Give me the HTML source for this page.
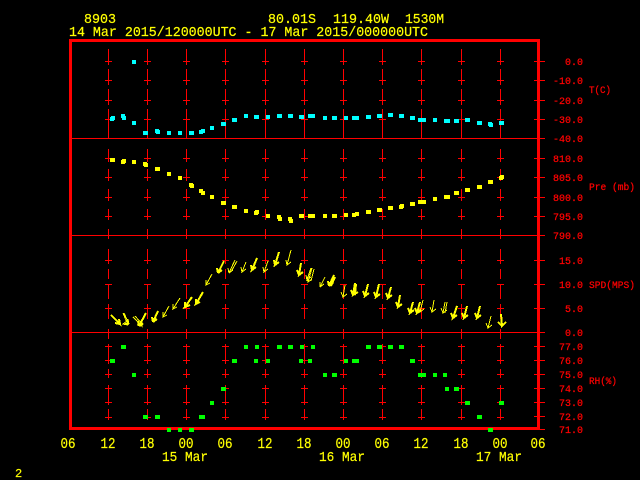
<!DOCTYPE html>
<html><head><meta charset="utf-8"><style>
html,body{margin:0;padding:0;background:#000;width:640px;height:480px;overflow:hidden}
svg{display:block}
text{font-family:"Liberation Mono",monospace}
.y{fill:#ff0;font-size:14px;stroke:#ff0;stroke-width:.2px}
.r{fill:#f00;font-size:10px;text-anchor:end;stroke:#f00;stroke-width:.25px}
.l{fill:#f00;font-size:10.500px;stroke:#f00;stroke-width:.25px}
.x{fill:#ff0;font-size:14.500px;text-anchor:middle;stroke:#ff0;stroke-width:.2px}
</style></head><body>
<svg width="640" height="480" viewBox="0 0 640 480" xmlns="http://www.w3.org/2000/svg">
<rect width="640" height="480" fill="#000"/>
<defs>
<path id="col" d="M.5 49V65M.5 69V85M.5 89V105M.5 109V138M.5 149V162M.5 169V181M.5 189V201M.5 209V220M.5 229V239M.5 249V264M.5 269V279M.5 284V299M.5 304V319M.5 329V339M.5 344V364M.5 369V378M.5 385V405M.5 409V420M-3 61.500H4M-3 80.500H4M-3 100.500H4M-3 119.500H4M-3 158.500H4M-3 177.500H4M-3 197.500H4M-3 216.500H4M-3 260.500H4M-3 284.500H4M-3 308.500H4M-3 346.500H4M-3 360.500H4M-3 374.500H4M-3 388.500H4M-3 402.500H4M-3 417.500H4" stroke="#f00" stroke-width="1" fill="none" shape-rendering="crispEdges"/>
</defs>
<use href="#col" x="108"/><use href="#col" x="147"/><use href="#col" x="186"/><use href="#col" x="225"/><use href="#col" x="265"/><use href="#col" x="304"/><use href="#col" x="343"/><use href="#col" x="382"/><use href="#col" x="421"/><use href="#col" x="461"/><use href="#col" x="500"/>
<g fill="#f00" shape-rendering="crispEdges">
<rect x="69" y="39" width="471" height="3"/>
<rect x="69" y="39" width="3" height="391"/>
<rect x="537" y="39" width="3" height="391"/>
<rect x="69" y="427" width="471" height="3"/>
<rect x="72" y="138" width="473" height="1"/>
<rect x="72" y="235" width="473" height="1"/>
<rect x="72" y="332" width="473" height="1"/>
<rect x="540" y="429" width="5" height="1"/>
<rect x="534" y="61" width="11" height="1"/><rect x="534" y="80" width="11" height="1"/><rect x="534" y="100" width="11" height="1"/><rect x="534" y="119" width="11" height="1"/>
<rect x="534" y="158" width="11" height="1"/><rect x="534" y="177" width="11" height="1"/><rect x="534" y="197" width="11" height="1"/><rect x="534" y="216" width="11" height="1"/>
<rect x="534" y="260" width="11" height="1"/><rect x="534" y="284" width="11" height="1"/><rect x="534" y="308" width="11" height="1"/>
<rect x="534" y="346" width="11" height="1"/><rect x="534" y="360" width="11" height="1"/><rect x="534" y="374" width="11" height="1"/><rect x="534" y="388" width="11" height="1"/><rect x="534" y="402" width="11" height="1"/><rect x="534" y="416" width="11" height="1"/>
</g>
<g fill="#0ff" shape-rendering="crispEdges">
<rect x="110" y="117" width="4" height="4"/><rect x="111" y="116" width="4" height="4"/><rect x="121" y="114" width="4" height="4"/><rect x="122" y="116" width="4" height="4"/><rect x="132" y="121" width="4" height="4"/><rect x="132" y="60" width="4" height="4"/><rect x="143" y="131" width="5" height="4"/><rect x="155" y="129" width="4" height="4"/><rect x="156" y="130" width="4" height="4"/><rect x="167" y="131" width="4" height="4"/><rect x="178" y="131" width="4" height="4"/><rect x="189" y="131" width="5" height="4"/><rect x="199" y="130" width="4" height="4"/><rect x="201" y="129" width="4" height="4"/><rect x="210" y="126" width="4" height="4"/><rect x="221" y="122" width="5" height="4"/><rect x="232" y="118" width="5" height="4"/><rect x="244" y="114" width="4" height="4"/><rect x="254" y="115" width="5" height="4"/><rect x="266" y="115" width="4" height="4"/><rect x="277" y="114" width="5" height="4"/><rect x="288" y="114" width="5" height="4"/><rect x="299" y="115" width="5" height="4"/><rect x="308" y="114" width="7" height="4"/><rect x="323" y="116" width="4" height="4"/><rect x="332" y="116" width="5" height="4"/><rect x="344" y="116" width="4" height="4"/><rect x="352" y="116" width="7" height="4"/><rect x="366" y="115" width="5" height="4"/><rect x="377" y="114" width="5" height="4"/><rect x="388" y="113" width="5" height="4"/><rect x="399" y="114" width="5" height="4"/><rect x="410" y="116" width="5" height="4"/><rect x="418" y="118" width="8" height="4"/><rect x="433" y="118" width="4" height="4"/><rect x="444" y="119" width="6" height="4"/><rect x="454" y="119" width="5" height="4"/><rect x="465" y="118" width="5" height="4"/><rect x="477" y="121" width="5" height="4"/><rect x="488" y="122" width="4" height="4"/><rect x="489" y="123" width="4" height="4"/><rect x="499" y="121" width="5" height="4"/>
</g>
<g fill="#ff0" shape-rendering="crispEdges">
<rect x="110" y="158" width="5" height="4"/><rect x="121" y="160" width="4" height="4"/><rect x="122" y="159" width="4" height="4"/><rect x="132" y="160" width="4" height="4"/><rect x="143" y="162" width="4" height="4"/><rect x="144" y="163" width="4" height="4"/><rect x="155" y="167" width="5" height="4"/><rect x="167" y="172" width="4" height="4"/><rect x="178" y="176" width="4" height="4"/><rect x="189" y="183" width="4" height="4"/><rect x="190" y="184" width="4" height="4"/><rect x="199" y="189" width="4" height="4"/><rect x="201" y="191" width="4" height="4"/><rect x="210" y="195" width="4" height="4"/><rect x="221" y="201" width="5" height="4"/><rect x="232" y="205" width="5" height="4"/><rect x="244" y="209" width="4" height="4"/><rect x="254" y="211" width="4" height="4"/><rect x="255" y="210" width="4" height="4"/><rect x="266" y="214" width="4" height="4"/><rect x="277" y="215" width="4" height="4"/><rect x="278" y="217" width="4" height="4"/><rect x="288" y="217" width="4" height="4"/><rect x="289" y="219" width="4" height="4"/><rect x="299" y="214" width="5" height="4"/><rect x="308" y="214" width="7" height="4"/><rect x="323" y="214" width="4" height="4"/><rect x="332" y="214" width="5" height="4"/><rect x="344" y="213" width="4" height="4"/><rect x="352" y="213" width="4" height="4"/><rect x="355" y="212" width="4" height="4"/><rect x="366" y="210" width="5" height="4"/><rect x="377" y="208" width="5" height="4"/><rect x="388" y="206" width="5" height="4"/><rect x="399" y="205" width="4" height="4"/><rect x="400" y="204" width="4" height="4"/><rect x="410" y="202" width="5" height="4"/><rect x="418" y="200" width="8" height="4"/><rect x="433" y="197" width="4" height="4"/><rect x="444" y="195" width="6" height="4"/><rect x="454" y="191" width="5" height="4"/><rect x="465" y="188" width="5" height="4"/><rect x="477" y="185" width="5" height="4"/><rect x="488" y="180" width="5" height="4"/><rect x="499" y="176" width="4" height="4"/><rect x="500" y="175" width="4" height="4"/>
</g>
<g fill="none" stroke="#ff0" stroke-width="1" shape-rendering="crispEdges">
<path d="M111 315L120 324l-1-5m1 5l-5-1" stroke-width="2"/>
<path d="M123 313L128 325l-1-5m1 5l-5-1l4-3M124 313L129 324l-1-5m1 5l-5-1"/>
<path d="M133 317L142 326l-1-5m1 5l-5-1M135 316L143 325"/>
<path d="M146 313L139 326l4-3m-4 3l-1-5" stroke-width="2"/>
<path d="M158 311L153 322l4-3m-4 3l-1-5" stroke-width="2"/>
<path d="M169 306L163 317l4-2m-4 2l0-5"/>
<path d="M180 298L173 309l4-2m-4 2l0-5"/>
<path d="M192 297L185 307l5-2m-5 2l0-5" stroke-width="2"/>
<path d="M203 292L196 304l4-2m-4 2l0-5" stroke-width="2"/>
<path d="M212 274L206 285l4-2m-4 2l0-5"/>
<path d="M224 261L218 273l4-3m-4 3l-1-5" stroke-width="2"/>
<path d="M235 260L229 273l4-3m-4 3l-1-5M237 261L231 272"/>
<path d="M246 262L242 272l4-3m-4 3l-1-5"/>
<path d="M257 258L252 270l4-3m-4 3l-1-5" stroke-width="2"/>
<path d="M268 261L264 272l4-3m-4 3l-1-5"/>
<path d="M279 252L275 265l4-3m-4 3l-1-5" stroke-width="2"/>
<path d="M291 250L287 265l4-3m-4 3l-1-5"/>
<path d="M301 263L299 275l4-3m-4 3l-2-5" stroke-width="2"/>
<path d="M311 268L307 280l4-3m-4 3l-1-5"/>
<path d="M312 268L308 282l4-3m-4 3l-1-5M314 269L311 281"/>
<path d="M325 277L320 287l4-3m-4 3l0-5"/>
<path d="M334 275L329 286l4-3m-4 3l-1-5M335 277L331 286" stroke-width="2"/>
<path d="M345 285L343 297l4-3m-4 3l-2-5"/>
<path d="M355 283L353 295l5-3m-5 3l-2-5M356 284L355 294l-3-1" stroke-width="2"/>
<path d="M368 284L365 296l4-3m-4 3l-2-5" stroke-width="2"/>
<path d="M379 284L376 297l4-3m-4 3l-2-5" stroke-width="2"/>
<path d="M391 287L388 298l4-3m-4 3l-2-5" stroke-width="2"/>
<path d="M400 295L398 307l4-3m-4 3l-2-5" stroke-width="2"/>
<path d="M413 302L410 313l4-3m-4 3l-2-5" stroke-width="2"/>
<path d="M420 302L417 313l4-3m-4 3l-2-5" stroke-width="2"/>
<path d="M423 300L420 312l4-3m-4 3l-2-5"/>
<path d="M434 300L432 312l4-3m-4 3l-2-5"/>
<path d="M445 302L443 313l4-3m-4 3l-2-5M447 302L445 313"/>
<path d="M457 306L453 318l4-3m-4 3l-2-5" stroke-width="2"/>
<path d="M467 306L464 318l4-3m-4 3l-2-5" stroke-width="2"/>
<path d="M480 306L477 318l4-3m-4 3l-2-5" stroke-width="2"/>
<path d="M491 316L488 328l4-3m-4 3l-2-5"/>
<path d="M501 314L502 326l4-4m-4 4l-4-4" stroke-width="2"/>
</g>
<g fill="#0f0" shape-rendering="crispEdges">
<rect x="121" y="345" width="5" height="4"/><rect x="110" y="359" width="5" height="4"/><rect x="132" y="373" width="4" height="4"/><rect x="143" y="415" width="5" height="4"/><rect x="155" y="415" width="5" height="4"/><rect x="167" y="428" width="4" height="4"/><rect x="178" y="428" width="4" height="4"/><rect x="189" y="428" width="5" height="4"/><rect x="199" y="415" width="6" height="4"/><rect x="210" y="401" width="4" height="4"/><rect x="221" y="387" width="5" height="4"/><rect x="232" y="359" width="5" height="4"/><rect x="244" y="345" width="4" height="4"/><rect x="254" y="359" width="4" height="4"/><rect x="255" y="345" width="4" height="4"/><rect x="266" y="359" width="4" height="4"/><rect x="277" y="345" width="5" height="4"/><rect x="288" y="345" width="5" height="4"/><rect x="300" y="345" width="4" height="4"/><rect x="299" y="359" width="4" height="4"/><rect x="308" y="359" width="4" height="4"/><rect x="311" y="345" width="4" height="4"/><rect x="323" y="373" width="4" height="4"/><rect x="332" y="373" width="5" height="4"/><rect x="344" y="359" width="4" height="4"/><rect x="352" y="359" width="7" height="4"/><rect x="366" y="345" width="5" height="4"/><rect x="377" y="345" width="5" height="4"/><rect x="388" y="345" width="5" height="4"/><rect x="399" y="345" width="5" height="4"/><rect x="410" y="359" width="5" height="4"/><rect x="418" y="373" width="8" height="4"/><rect x="433" y="373" width="4" height="4"/><rect x="443" y="373" width="4" height="4"/><rect x="445" y="387" width="4" height="4"/><rect x="454" y="387" width="5" height="4"/><rect x="465" y="401" width="5" height="4"/><rect x="477" y="415" width="5" height="4"/><rect x="488" y="428" width="5" height="4"/><rect x="499" y="401" width="5" height="4"/>
</g>
<text class="y" x="84" y="23" textLength="32" lengthAdjust="spacingAndGlyphs">8903</text>
<text class="y" x="268" y="23" textLength="48" lengthAdjust="spacingAndGlyphs">80.01S</text>
<text class="y" x="333" y="23" textLength="56" lengthAdjust="spacingAndGlyphs">119.40W</text>
<text class="y" x="405" y="23" textLength="39" lengthAdjust="spacingAndGlyphs">1530M</text>
<text class="y" x="69" y="36" textLength="359" lengthAdjust="spacingAndGlyphs">14 Mar 2015/120000UTC - 17 Mar 2015/000000UTC</text>
<g>
<text class="r" x="583" y="65">0.0</text><text class="r" x="583" y="84">-10.0</text><text class="r" x="583" y="104">-20.0</text><text class="r" x="583" y="123">-30.0</text><text class="r" x="583" y="142">-40.0</text>
<text class="r" x="583" y="162">810.0</text><text class="r" x="583" y="181">805.0</text><text class="r" x="583" y="201">800.0</text><text class="r" x="583" y="220">795.0</text><text class="r" x="583" y="239">790.0</text>
<text class="r" x="583" y="264">15.0</text><text class="r" x="583" y="288">10.0</text><text class="r" x="583" y="312">5.0</text><text class="r" x="583" y="336">0.0</text>
<text class="r" x="583" y="350">77.0</text><text class="r" x="583" y="364">76.0</text><text class="r" x="583" y="378">75.0</text><text class="r" x="583" y="392">74.0</text><text class="r" x="583" y="406">73.0</text><text class="r" x="583" y="420">72.0</text><text class="r" x="583" y="433">71.0</text>
</g>
<text class="l" x="589" y="93" textLength="22" lengthAdjust="spacingAndGlyphs">T(C)</text>
<text class="l" x="589" y="190" textLength="46" lengthAdjust="spacingAndGlyphs">Pre (mb)</text>
<text class="l" x="589" y="288" textLength="46" lengthAdjust="spacingAndGlyphs">SPD(MPS)</text>
<text class="l" x="589" y="384" textLength="28" lengthAdjust="spacingAndGlyphs">RH(%)</text>
<text class="x" x="68" y="448" textLength="15" lengthAdjust="spacingAndGlyphs">06</text><text class="x" x="108" y="448" textLength="15" lengthAdjust="spacingAndGlyphs">12</text><text class="x" x="147" y="448" textLength="15" lengthAdjust="spacingAndGlyphs">18</text><text class="x" x="186" y="448" textLength="15" lengthAdjust="spacingAndGlyphs">00</text><text class="x" x="225" y="448" textLength="15" lengthAdjust="spacingAndGlyphs">06</text><text class="x" x="265" y="448" textLength="15" lengthAdjust="spacingAndGlyphs">12</text><text class="x" x="304" y="448" textLength="15" lengthAdjust="spacingAndGlyphs">18</text><text class="x" x="343" y="448" textLength="15" lengthAdjust="spacingAndGlyphs">00</text><text class="x" x="382" y="448" textLength="15" lengthAdjust="spacingAndGlyphs">06</text><text class="x" x="421" y="448" textLength="15" lengthAdjust="spacingAndGlyphs">12</text><text class="x" x="461" y="448" textLength="15" lengthAdjust="spacingAndGlyphs">18</text><text class="x" x="500" y="448" textLength="15" lengthAdjust="spacingAndGlyphs">00</text><text class="x" x="538" y="448" textLength="15" lengthAdjust="spacingAndGlyphs">06</text>
<text class="y" x="162" y="461" textLength="46" lengthAdjust="spacingAndGlyphs">15 Mar</text>
<text class="y" x="319" y="461" textLength="46" lengthAdjust="spacingAndGlyphs">16 Mar</text>
<text class="y" x="476" y="461" textLength="46" lengthAdjust="spacingAndGlyphs">17 Mar</text>
<text class="y" x="15" y="477" style="font-size:12px">2</text>
</svg>
</body></html>
